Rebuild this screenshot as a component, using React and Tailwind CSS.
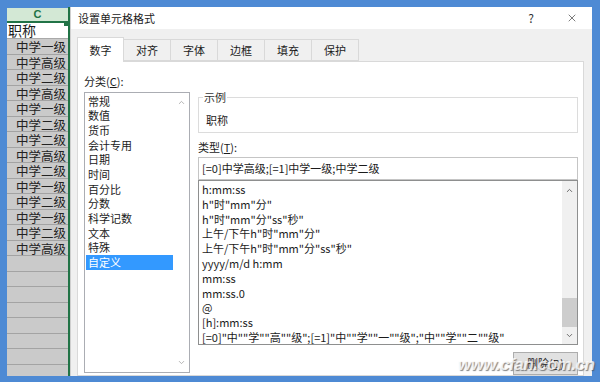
import React from 'react';
import { X, ChevronUp, ChevronDown } from 'lucide-react';

const cells = ['中学一级', '中学高级', '中学二级', '中学高级', '中学一级', '中学二级', '中学二级', '中学高级', '中学二级', '中学一级', '中学二级', '中学一级', '中学二级', '中学高级', '', '', '', '', '', '', '', '', ''];

const tabs = ['数字', '对齐', '字体', '边框', '填充', '保护'];

const categories = ['常规', '数值', '货币', '会计专用', '日期', '时间', '百分比', '分数', '科学记数', '文本', '特殊', '自定义'];

const formats = [
  'h:mm:ss',
  'h"时"mm"分"',
  'h"时"mm"分"ss"秒"',
  '上午/下午h"时"mm"分"',
  '上午/下午h"时"mm"分"ss"秒"',
  'yyyy/m/d h:mm',
  'mm:ss',
  'mm:ss.0',
  '@',
  '[h]:mm:ss',
  '[=0]"中""学""高""级";[=1]"中""学""一""级";"中""学""二""级"',
];

const font = { fontFamily: '"Noto Sans CJK SC", "Noto Sans", sans-serif' };

const App = () => {
  return (
    <div className="relative w-[600px] h-[382px] overflow-hidden bg-[#4e8ad4] flex pl-[7px] pt-[7px] pb-[6px] text-[#1b1b1b]" style={font}>
      {/* Spreadsheet column C */}
      <div className="relative w-[61px] mt-[1px] flex flex-col overflow-hidden bg-[#cacaca]">
        <div className="h-[15px] shrink-0 bg-[#d3e8d5] border-b-2 border-[#217346] flex items-center justify-center text-[11px] font-bold text-[#217346] leading-[11px]" style={{ fontFamily: '"Liberation Sans", sans-serif' }}>
          C
        </div>
        <div className="h-[16px] shrink-0 bg-white border-b border-[#a9a9a9] pl-[1px] text-[14px] leading-[15px]">
          职称
        </div>
        {cells.map((c, i) => (
          <div key={i} className="h-[15.5px] shrink-0 border-b border-[#a3a3a3] pl-[9px] text-[12.5px] leading-[15px] text-[#222]">
            {c}
          </div>
        ))}
        <div className="absolute right-0 top-[14px] w-[4px] h-[4px] bg-[#217346]" />
      </div>
      <div className="w-[2px] bg-[#217346]" />

      {/* Dialog */}
      <div className="flex-1 mr-[8px] flex flex-col bg-[#f0f0f0] border-l border-[#cfcfcf] overflow-hidden">
        <div className="h-[22px] shrink-0 bg-white flex items-center pl-[7px] pr-[14px] text-[11px]">
          <span>设置单元格格式</span>
          <span className="ml-auto mr-[32px] text-[12px] text-[#333]">?</span>
          <X size={12} strokeWidth={1.3} className="text-[#333]" />
        </div>

        <div className="flex-1 flex flex-col pl-[6px] pr-[8px] pt-[8px] min-h-0">
          {/* Tabs */}
          <div className="flex items-end h-[24px] shrink-0">
            {tabs.map((t, i) =>
              i === 0 ? (
                <div key={t} className="w-[47px] h-[25px] -mb-[1px] bg-white border border-b-0 border-[#d9d9d9] flex items-center justify-center text-[11px] relative z-10">
                  {t}
                </div>
              ) : (
                <div key={t} className="w-[47px] h-[22px] bg-[#f0f0f0] border border-l-0 border-[#d9d9d9] flex items-center justify-center text-[11px]">
                  {t}
                </div>
              )
            )}
          </div>

          {/* Panel */}
          <div className="flex-1 bg-white border border-[#d9d9d9] flex pl-[6px] pr-[5px] min-h-0">
            {/* Category */}
            <div className="w-[106px] flex flex-col pt-[11px]">
              <div className="h-[16px] leading-[16px] text-[11px]">
                分类(<span className="underline">C</span>):
              </div>
              <div className="mt-[3px] h-[281px] border border-[#abadb3] flex">
                <div className="flex-1 flex flex-col text-[11px] pt-[0.5px]">
                  {categories.map((c) =>
                    c === '自定义' ? (
                      <div key={c} className="h-[14.7px] leading-[14.7px] ml-[1px] pl-[2px] bg-[#3399ff] text-white">
                        {c}
                      </div>
                    ) : (
                      <div key={c} className="h-[14.7px] leading-[14.7px] ml-[1px] pl-[2px]">
                        {c}
                      </div>
                    )
                  )}
                </div>
                <div className="w-[16px] flex flex-col items-center justify-between py-[5px] text-[#a7a7a7]">
                  <ChevronUp size={9} strokeWidth={2.2} />
                  <ChevronDown size={9} strokeWidth={2.2} />
                </div>
              </div>
            </div>

            {/* Right side */}
            <div className="flex-1 ml-[8px] flex flex-col pt-[35px] text-[11px]">
              <div className="relative h-[37px] border border-[#dcdcdc] pl-[7px] pt-[15px] leading-[14px]">
                <span className="absolute -top-[8px] left-[4px] bg-white px-[1px] leading-[14px] text-[#333]">示例</span>
                职称
              </div>
              <div className="mt-[7px] leading-[14px]">
                类型(<span className="underline">T</span>):
              </div>
              <div className="mt-[3px] h-[23px] border border-[#c5c5c5] pl-[3px] leading-[21px]">
                [=0]中学高级;[=1]中学一级;中学二级
              </div>
              <div className="h-[165px] border border-[#8e8f8f] flex">
                <div className="flex-1 flex flex-col pl-[3px] pt-[1px]">
                  {formats.map((f) => (
                    <div key={f} className="h-[14.8px] leading-[14.8px] whitespace-nowrap">
                      {f}
                    </div>
                  ))}
                </div>
                <div className="w-[15px] bg-[#f0f0f0] flex flex-col items-center text-[#606060] pt-[5px]">
                  <ChevronUp size={9} strokeWidth={2.4} />
                  <div className="mt-[103px] w-full h-[29px] bg-[#cdcdcd]" />
                  <ChevronDown size={9} strokeWidth={2.4} className="mt-[4px]" />
                </div>
              </div>
              <div className="self-end mt-[7px] w-[65px] h-[24px] bg-[#e1e1e1] border border-[#adadad] flex items-center justify-center">
                删除(<span className="underline">D</span>)
              </div>
            </div>
          </div>
        </div>
      </div>

      {/* Watermark */}
      <div
        className="absolute left-[458px] top-[352px] text-[17px] italic font-bold text-white/80 tracking-tight"
        style={{ fontFamily: '"Liberation Sans", sans-serif', textShadow: '1px 1px 1px rgba(80,80,80,0.7)' }}
      >
        www.cfan.com.cn
      </div>
    </div>
  );
};

export default App;
